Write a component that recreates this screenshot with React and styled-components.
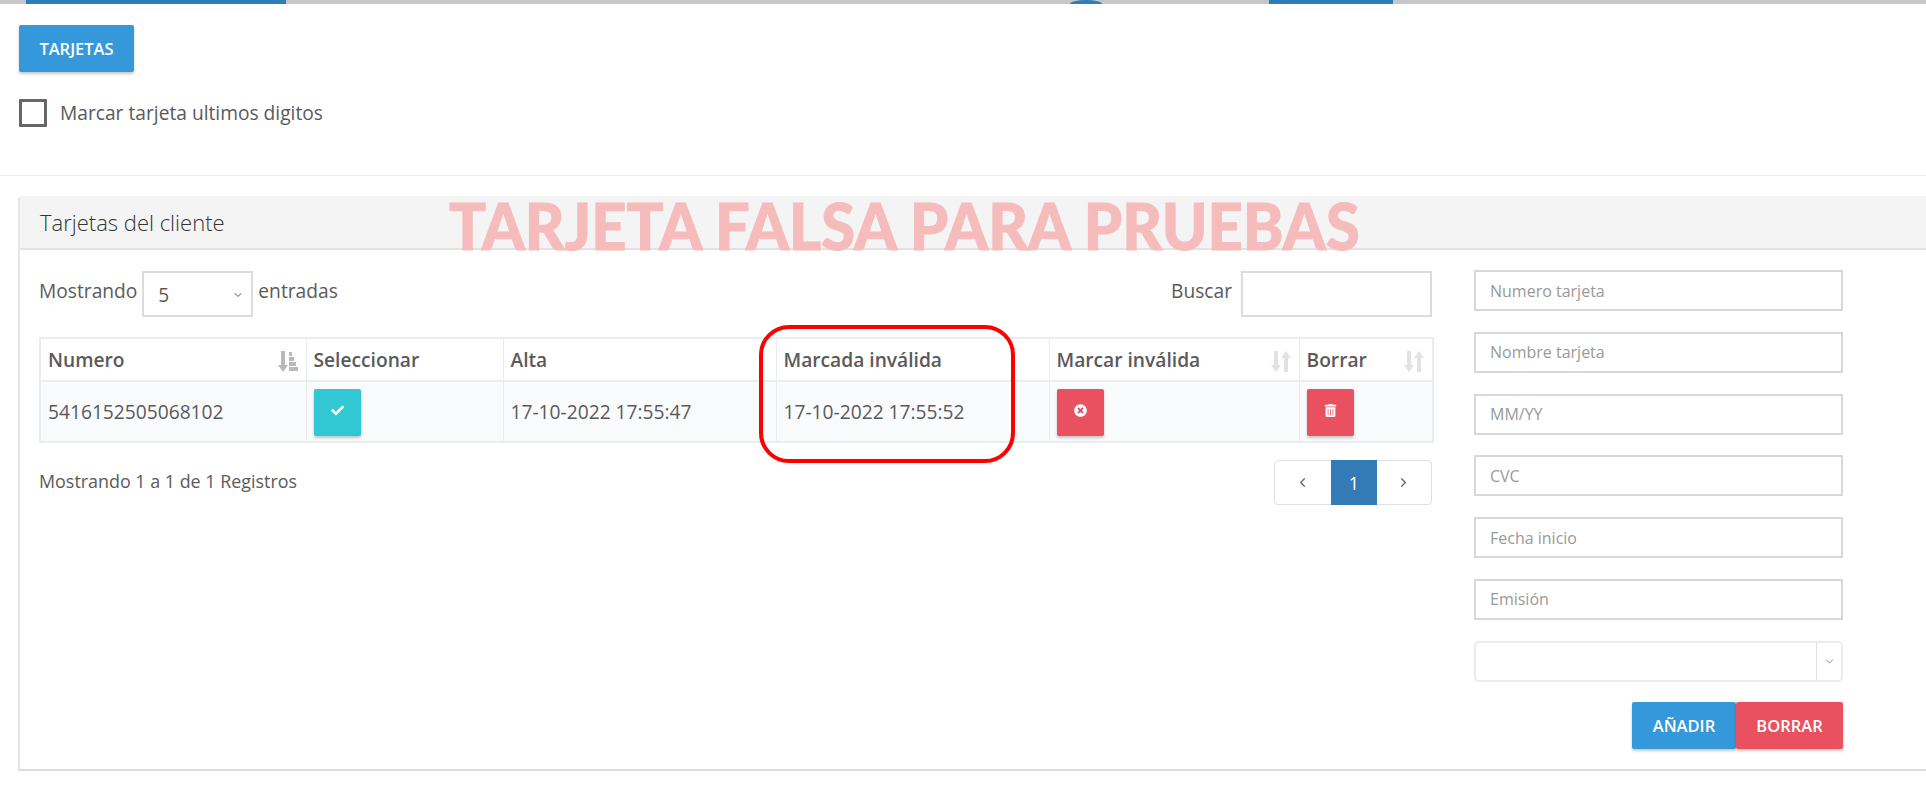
import React from "react";
import styled, { createGlobalStyle } from "styled-components";
import { FaCheck, FaTimesCircle, FaTrashAlt } from "react-icons/fa";
import { FiChevronDown, FiChevronLeft, FiChevronRight } from "react-icons/fi";

const Global = createGlobalStyle`
  html, body { margin: 0; padding: 0; background: #fff; }
  body { font-family: "Open Sans", "Liberation Sans", sans-serif; color: #5a5a5a; font-size: 19.2px; overflow: hidden; }
  * { box-sizing: border-box; }
`;

const Page = styled.div`
  position: relative;
  width: 1926px;
  height: 786px;
  overflow: hidden;
`;

const TopBar = styled.div`
  display: flex;
  align-items: flex-end;
  height: 4px;
  background: #c4c6ca;
`;
const TopSegment = styled.div`
  height: 4px;
  width: ${(p) => p.$width}px;
  margin-left: ${(p) => p.$offset}px;
  background: #2f7db8;
`;
const TopKnob = styled(TopSegment)`
  border-radius: 50% 50% 0 0 / 100% 100% 0 0;
`;

const Intro = styled.section`
  padding: 21px 19px 0;
  height: 172px;
  border-bottom: 1px solid #ececec;
`;

const Button = styled.button`
  display: inline-flex;
  align-items: center;
  justify-content: center;
  width: ${(p) => p.$width}px;
  height: 47px;
  border: 0;
  border-radius: 2px;
  padding: 0;
  color: #fff;
  font: 600 16.5px "Open Sans", sans-serif;
  background: ${(p) => p.$color};
  box-shadow: 0 2px 3px rgba(0, 0, 0, 0.22);
`;

const CheckRow = styled.label`
  display: flex;
  align-items: center;
  gap: 13px;
  margin-top: 27px;
  line-height: 28px;
`;
const CheckBox = styled.span`
  width: 28px;
  height: 28px;
  border: 3px solid #666;
  border-radius: 1px;
`;

const Panel = styled.section`
  margin: 20px 0 0 18px;
  height: 575px;
  border-left: 2px solid #e6e6e6;
  border-bottom: 2px solid #dcdcdc;
  border-top-left-radius: 4px;
`;
const PanelHead = styled.header`
  display: flex;
  align-items: center;
  height: 54px;
  padding: 0 0 0 20px;
  background: #f4f4f4;
  border-bottom: 2px solid #e2e2e2;
  font-size: 22px;
  font-weight: 300;
  color: #333;
`;
const Watermark = styled.div`
  position: absolute;
  left: 449px;
  top: 186px;
  font-family: Lato, "Open Sans", sans-serif;
  font-size: 65px;
  line-height: 78px;
  font-weight: 900;
  color: #f6bcbc;
  -webkit-text-stroke: 1px #f6bcbc;
  white-space: nowrap;
  transform: scaleX(0.945);
  transform-origin: left center;
`;

const PanelBody = styled.div`
  display: flex;
  align-items: flex-start;
`;
const ListCol = styled.div`
  width: 1412px;
  padding: 20px 0 0 19px;
`;
const Toolbar = styled.div`
  display: flex;
  align-items: flex-start;
  justify-content: space-between;
  height: 48px;
  padding-top: 1px;
`;
const ToolGroup = styled.div`
  display: flex;
  align-items: flex-start;
  gap: ${(p) => p.$gap}px;
  line-height: 40px;
`;
const SelectBox = styled.div`
  display: flex;
  align-items: center;
  justify-content: space-between;
  width: 111px;
  height: 46px;
  padding: 2px 7px 0 14px;
  border: 2px solid #dcdcdc;
  svg { width: 12px; height: 12px; color: #555; }
`;
const SearchBox = styled.input`
  width: 191px;
  height: 46px;
  border: 2px solid #dcdcdc;
  background: #fff;
  margin: 0;
`;

const Table = styled.table`
  width: 1393px;
  margin-top: 19px;
  table-layout: fixed;
  border-collapse: collapse;
  border: 2px solid #e9edf2;
`;
const Th = styled.th`
  position: relative;
  height: 43px;
  padding: 0 7px;
  text-align: left;
  font-size: 19.2px;
  font-weight: 600;
  color: #5a5a5a;
  border: 1px solid #e9edf2;
  border-bottom-width: 2px;
`;
const Td = styled.td`
  height: 61px;
  padding: 0 7px;
  background: #fafbfd;
  border: 1px solid #e9edf2;
`;
const SortMark = styled.svg`
  position: absolute;
  right: 8px;
  top: 12px;
  width: 20px;
  height: 21px;
`;
const ActionButton = styled.button`
  display: flex;
  align-items: flex-start;
  justify-content: center;
  width: ${(p) => p.$width}px;
  height: 47px;
  border: 0;
  border-radius: 2px;
  margin-top: 1px;
  padding: 15px 0 0;
  color: #fff;
  background: ${(p) => p.$color};
  box-shadow: 0 2px 3px rgba(0, 0, 0, 0.22);
  font-size: 13px;
`;

const ListFooter = styled.div`
  display: flex;
  justify-content: space-between;
  margin-top: 17px;
`;
const InfoText = styled.div`
  font-size: 17.9px;
  line-height: 42px;
`;
const Pager = styled.div`
  display: flex;
  width: 158px;
  height: 45px;
  border: 1px solid #dfdfdf;
  border-radius: 4px;
`;
const PageCell = styled.span`
  flex: ${(p) => (p.$active ? "0 0 46px" : "1")};
  display: flex;
  align-items: center;
  justify-content: center;
  font-size: 18px;
  color: ${(p) => (p.$active ? "#fff" : "#666")};
  background: ${(p) => (p.$active ? "#337ab7" : "transparent")};
  margin: ${(p) => (p.$active ? "-1px -1px -1px 1px" : "0")};
  svg { width: 15px; height: 15px; stroke-width: 2; }
`;

const FormCol = styled.form`
  display: flex;
  flex-direction: column;
  gap: 20.75px;
  width: 369px;
  margin: 20px 0 0 42px;
`;
const Field = styled.input`
  width: 100%;
  height: 41px;
  flex: none;
  padding: 0 14px;
  border: 2px solid #d8d8d8;
  background: #fff;
  font: 16px "Open Sans", sans-serif;
  &::placeholder { color: #999; opacity: 1; }
`;
const ComboBox = styled.div`
  display: flex;
  justify-content: flex-end;
  height: 41px;
  border: 2px solid #ececec;
  border-radius: 5px;
`;
const ComboArrow = styled.span`
  display: flex;
  align-items: center;
  justify-content: center;
  width: 25px;
  border-left: 1px solid #e2e2e2;
  color: #777;
  svg { width: 13px; height: 13px; stroke-width: 1.5; }
`;
const FormActions = styled.div`
  display: flex;
  justify-content: flex-end;
`;

const Annotation = styled.div`
  position: absolute;
  left: 759px;
  top: 325px;
  width: 256px;
  height: 138px;
  border: 4px solid #f00;
  border-radius: 30px;
  pointer-events: none;
`;

function SortAsc() {
  return (
    <SortMark viewBox="0 0 20 21" fill="#b9b9b9">
      <path d="M3 0h4v14h3l-5 7-5-7h3z" />
      <path d="M11 1h3v4h-3zM11 6h5v4h-5zM11 11h7v4h-7zM11 16h9v4h-9z" />
    </SortMark>
  );
}
function SortBoth() {
  return (
    <SortMark viewBox="0 0 20 21" fill="#e2e2e2">
      <path d="M3 0h4v14h3l-5 7-5-7h3z" />
      <path d="M13 21h4V7h3l-5-7-5 7h3z" />
    </SortMark>
  );
}

const fields = ["Numero tarjeta", "Nombre tarjeta", "MM/YY", "CVC", "Fecha inicio", "Emisión"];

export default function App() {
  return (
    <Page>
      <Global />
      <TopBar>
        <TopSegment $offset={26} $width={260} />
        <TopKnob $offset={784} $width={32} />
        <TopSegment $offset={167} $width={124} />
      </TopBar>
      <Intro>
        <Button type="button" $width={115} $color="#3498db">TARJETAS</Button>
        <CheckRow>
          <CheckBox />
          Marcar tarjeta ultimos digitos
        </CheckRow>
      </Intro>
      <Panel>
        <PanelHead>Tarjetas del cliente</PanelHead>
        <PanelBody>
          <ListCol>
            <Toolbar>
              <ToolGroup $gap={5}>
                Mostrando
                <SelectBox>5 <FiChevronDown /></SelectBox>
                entradas
              </ToolGroup>
              <ToolGroup $gap={9}>
                Buscar
                <SearchBox />
              </ToolGroup>
            </Toolbar>
            <Table>
              <colgroup>
                <col width="266" />
                <col width="197" />
                <col width="273" />
                <col width="273" />
                <col width="250" />
                <col width="134" />
              </colgroup>
              <thead>
                <tr>
                  <Th>Numero<SortAsc /></Th>
                  <Th>Seleccionar</Th>
                  <Th>Alta</Th>
                  <Th>Marcada inválida</Th>
                  <Th>Marcar inválida<SortBoth /></Th>
                  <Th>Borrar<SortBoth /></Th>
                </tr>
              </thead>
              <tbody>
                <tr>
                  <Td>5416152505068102</Td>
                  <Td><ActionButton $width={47} $color="#31c7d3"><FaCheck /></ActionButton></Td>
                  <Td>17-10-2022 17:55:47</Td>
                  <Td>17-10-2022 17:55:52</Td>
                  <Td><ActionButton $width={47} $color="#ea5160"><FaTimesCircle /></ActionButton></Td>
                  <Td><ActionButton $width={47} $color="#ea5160"><FaTrashAlt /></ActionButton></Td>
                </tr>
              </tbody>
            </Table>
            <ListFooter>
              <InfoText>Mostrando 1 a 1 de 1 Registros</InfoText>
              <Pager>
                <PageCell><FiChevronLeft /></PageCell>
                <PageCell $active>1</PageCell>
                <PageCell><FiChevronRight /></PageCell>
              </Pager>
            </ListFooter>
          </ListCol>
          <FormCol>
            {fields.map((f) => <Field key={f} placeholder={f} />)}
            <ComboBox><ComboArrow><FiChevronDown /></ComboArrow></ComboBox>
            <FormActions>
              <Button type="button" $width={104} $color="#3498db">AÑADIR</Button>
              <Button type="button" $width={107} $color="#ea5160">BORRAR</Button>
            </FormActions>
          </FormCol>
        </PanelBody>
      </Panel>
      <Watermark>TARJETA FALSA PARA PRUEBAS</Watermark>
      <Annotation />
    </Page>
  );
}
